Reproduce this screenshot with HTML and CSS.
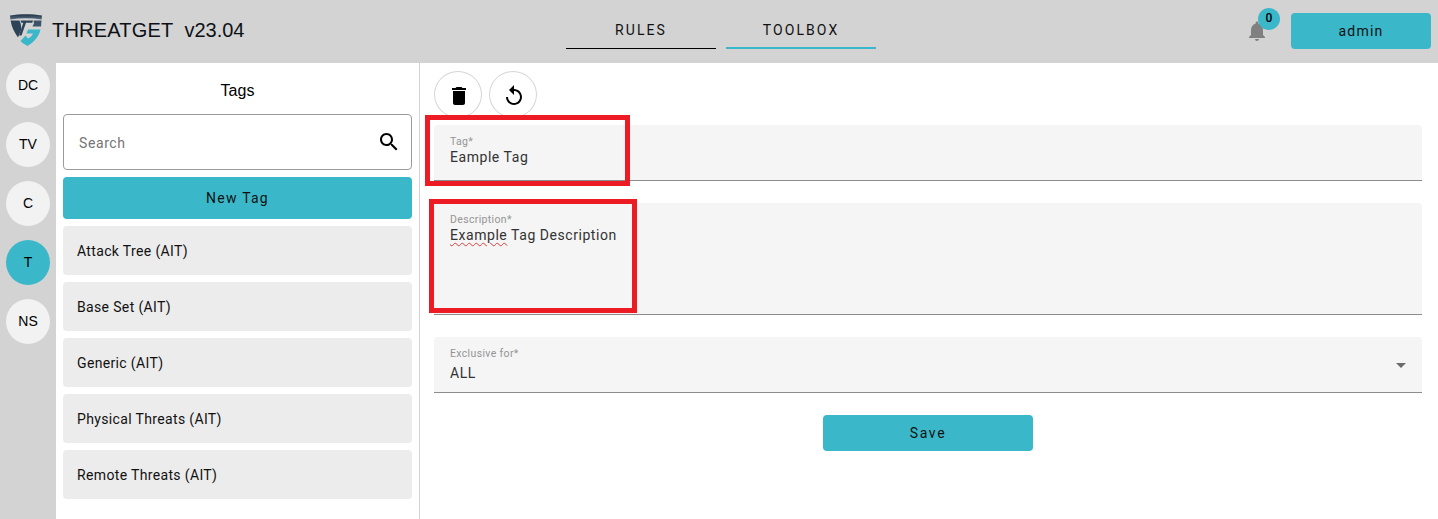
FILE: index.html
```html
<!DOCTYPE html>
<html lang="en">
<head>
<meta charset="utf-8">
<title>THREATGET</title>
<link rel="stylesheet" href="styles.css">
</head>
<body>
<header class="topbar">
  <div class="brand">
    <svg class="logo" width="32" height="32" viewBox="0 0 32 32">
      <defs>
        <linearGradient id="band" x1="0" y1="0" x2="0" y2="1">
          <stop offset="0" stop-color="#1f3346"/>
          <stop offset="1" stop-color="#5a6f80"/>
        </linearGradient>
      </defs>
      <path d="M0 1.500C10 -.3 22 -.3 32 1.500L31.700 5.500C21 3.800 11 3.800 .3 5.500Z" fill="url(#band)"/>
      <path d="M.6 6.500H9.500C11 10 11.500 13 11 16L8 23.500C4 18 1.500 12.500 .6 6.500Z" fill="#2c4257"/>
      <path d="M10.500 6.500H23L22.200 8.700H16L11.500 21.500H9L13.300 8.700H11.300Z" fill="#2c4257"/>
      <path d="M23.500 6.500H31.500L31 12.500H22.500L24 9.500Z" fill="#3d5468"/>
      <path d="M18 15.500H30.500C29 22 25 27.500 17.500 32C14.500 30.500 12.500 29 10.500 27L15.500 21.500L18 24.500C20.500 23.500 22 21.500 23 19.500H16.500Z" fill="#3ab8c9"/>
    </svg>
    <span class="brand-name">THREATGET</span>
    <span class="brand-version">v23.04</span>
  </div>
  <nav class="tabs">
    <a class="tab tab-dark">RULES</a>
    <a class="tab tab-teal">TOOLBOX</a>
  </nav>
  <div class="account">
    <div class="bell">
      <svg width="24" height="24" viewBox="0 0 24 24"><path fill="#808080" d="M12 22c1.100 0 2-.9 2-2h-4c0 1.100.9 2 2 2zm6-6v-5c0-3.070-1.630-5.640-4.500-6.320V4c0-.83-.67-1.500-1.500-1.500s-1.500.67-1.500 1.500v.68C7.640 5.360 6 7.920 6 11v5l-2 2v1h16v-1l-2-2z"/></svg>
      <span class="badge">0</span>
    </div>
    <button class="user-button">admin</button>
  </div>
</header>
<div class="body-row">
  <aside class="rail">
    <div class="rail-item">DC</div>
    <div class="rail-item">TV</div>
    <div class="rail-item">C</div>
    <div class="rail-item rail-active">T</div>
    <div class="rail-item">NS</div>
  </aside>
  <section class="list-panel">
    <h2 class="list-title">Tags</h2>
    <div class="search">
      <span class="search-text">Search</span>
      <svg width="24" height="24" viewBox="0 0 24 24"><path fill="#000" d="M15.500 14h-.79l-.28-.27C15.410 12.590 16 11.110 16 9.500 16 5.910 13.090 3 9.500 3S3 5.910 3 9.500 5.910 16 9.500 16c1.610 0 3.090-.59 4.230-1.570l.27.28v.79l5 4.990L20.490 19l-4.990-5zm-6 0C7.010 14 5 11.990 5 9.500S7.010 5 9.500 5 14 7.010 14 9.500 11.990 14 9.500 14z"/></svg>
    </div>
    <button class="new-tag">New Tag</button>
    <ul class="tag-list">
      <li class="tag-item">Attack Tree (AIT)</li>
      <li class="tag-item">Base Set (AIT)</li>
      <li class="tag-item">Generic (AIT)</li>
      <li class="tag-item">Physical Threats (AIT)</li>
      <li class="tag-item">Remote Threats (AIT)</li>
    </ul>
  </section>
  <main class="detail">
    <div class="actions">
      <button class="icon-button"><svg width="24" height="24" viewBox="0 0 24 24"><path fill="#000" d="M6 19c0 1.100.9 2 2 2h8c1.100 0 2-.9 2-2V7H6v12zM19 4h-3.500l-1-1h-5l-1 1H5v2h14V4z"/></svg></button>
      <button class="icon-button"><svg width="24" height="24" viewBox="0 0 24 24"><path fill="#000" d="M12 5V1L7 6l5 5V7c3.310 0 6 2.690 6 6s-2.690 6-6 6-6-2.690-6-6H4c0 4.420 3.580 8 8 8s8-3.580 8-8-3.580-8-8-8z"/></svg></button>
    </div>
    <div class="field field-tag">
      <span class="field-label">Tag*</span>
      <span class="field-value">Eample Tag</span>
      <span class="mark mark-tag"></span>
    </div>
    <div class="field field-desc">
      <span class="field-label">Description*</span>
      <span class="field-value"><span class="misspelt">Example</span> Tag Description</span>
      <span class="mark mark-desc"></span>
    </div>
    <div class="field field-select">
      <span class="field-label">Exclusive for*</span>
      <span class="field-value value-select">ALL</span>
      <span class="caret"></span>
    </div>
    <button class="save">Save</button>
  </main>
</div>
</body>
</html>
```
FILE: styles.css
```css
* { box-sizing: border-box; }
html, body { height: 100%; }
body {
  margin: 0;
  height: 519px;
  overflow: hidden;
  display: flex;
  flex-direction: column;
  font-family: Roboto, "Liberation Sans", sans-serif;
  color: #000;
  background: #fff;
}
button { font-family: inherit; border: 0; cursor: pointer; }

.topbar {
  height: 63px;
  flex: none;
  background: #d3d3d3;
  display: grid;
  grid-template-columns: 1fr auto 1fr;
  align-items: center;
}
.brand { display: flex; align-items: center; padding-left: 10px; font-family: "Liberation Sans", Arial, sans-serif; font-size: 20px; color: #0d1117; }
.logo { margin-right: 10px; margin-top: -3px; }
.brand-name { letter-spacing: .2px; margin-top: -2px; }
.brand-version { margin-left: 11px; margin-top: -2px; }
.tabs { display: flex; gap: 10px; margin-top: -3px; margin-left: 4px; }
.tab {
  width: 150px;
  height: 38px;
  padding-top: 9px;
  text-align: center;
  font-size: 14px;
  letter-spacing: 2.1px;
  line-height: 20px;
  color: #111;
}
.tab-dark { border-bottom: 1px solid #000; }
.tab-teal { border-bottom: 2px solid #3ab8c9; }
.account { display: flex; justify-content: flex-end; align-items: center; padding-right: 7px; }
.bell { position: relative; width: 24px; height: 24px; margin-right: 22px; margin-top: -1px; }
.badge {
  position: absolute;
  left: 13px;
  top: -11px;
  width: 22px;
  height: 22px;
  border-radius: 50%;
  background: #3ab8c9;
  font-size: 12px;
  font-weight: 500;
  line-height: 20px;
  text-align: center;
}
.user-button {
  width: 140px;
  height: 36px;
  margin-top: -2px;
  padding-bottom: 1px;
  border-radius: 4px;
  background: #3ab8c9;
  font-size: 14px;
  letter-spacing: 1.25px;
  color: #111;
}

.body-row { flex: 1; display: flex; min-height: 0; }
.rail {
  width: 56px;
  flex: none;
  background: #d3d3d3;
  padding: 0 6px;
  display: flex;
  flex-direction: column;
  gap: 14px;
}
.rail-item {
  width: 44px;
  height: 45px;
  border-radius: 50%;
  background: #f2f2f2;
  font-family: "Liberation Sans", Arial, sans-serif;
  font-size: 14px;
  display: flex;
  align-items: center;
  justify-content: center;
  padding-bottom: 2px;
}
.rail-active { background: #3ab8c9; }
.list-panel {
  width: 364px;
  flex: none;
  border-right: 1px solid #d3d3d3;
  padding: 0 7px;
}
.list-title {
  margin: 0;
  height: 51px;
  padding-top: 19px;
  font-family: "Liberation Sans", Arial, sans-serif;
  font-size: 16px;
  font-weight: 400;
  line-height: 18px;
  text-align: center;
}
.search {
  width: 349px;
  height: 56px;
  border: 1px solid #9b9b9b;
  border-radius: 4px;
  display: flex;
  align-items: center;
  justify-content: space-between;
  padding: 0 10px 0 15px;
}
.search-text { font-size: 14px; letter-spacing: .6px; color: #757575; margin-top: 2px; }
.new-tag {
  display: block;
  width: 349px;
  height: 42px;
  margin-top: 7px;
  background: #3ab8c9;
  border-radius: 4px;
  font-size: 14px;
  letter-spacing: 1.25px;
  color: #111;
}
.tag-list { list-style: none; margin: 7px 0 0; padding: 0; display: flex; flex-direction: column; gap: 7px; }
.tag-item {
  width: 349px;
  height: 49px;
  background: #ececec;
  border-radius: 4px;
  padding: 0 14px;
  font-size: 14px;
  line-height: 50px;
  letter-spacing: .35px;
  color: #111;
}

.detail { flex: 1; position: relative; padding: 8px 16px 0 14px; display: flex; flex-direction: column; }
.actions { display: flex; gap: 7px; height: 54px; }
.icon-button {
  width: 48px;
  height: 47px;
  border-radius: 50%;
  background: #fff;
  border: 1px solid #d6d6d6;
  padding: 2px 0 0 2px;
  display: flex;
  align-items: center;
  justify-content: center;
}
.field {
  position: relative;
  display: flex;
  flex-direction: column;
  background: #f5f5f5;
  border-bottom: 1px solid #8c8c8c;
  border-radius: 4px 4px 0 0;
  padding-left: 16px;
}
.field-tag { height: 56px; padding-top: 11px; }
.field-desc { height: 112px; margin-top: 22px; padding-top: 11px; }
.field-select { height: 56px; margin-top: 22px; padding-top: 11px; }
.field-label { font-size: 10.500px; line-height: 12px; letter-spacing: .35px; color: #949494; }
.field-value { font-size: 14px; line-height: 20px; letter-spacing: .55px; color: #333; margin-top: -1px; }
.value-select { margin-top: 3px; }
.misspelt { text-decoration: underline wavy #e03c3c 1px; text-underline-offset: 2px; }
.caret {
  position: absolute;
  right: 16px;
  top: 26px;
  border-left: 5px solid transparent;
  border-right: 5px solid transparent;
  border-top: 5px solid #6b6b6b;
}
.mark { position: absolute; border: 5px solid #ed1c24; pointer-events: none; }
.mark-tag { left: -9px; top: -10px; width: 205px; height: 71px; }
.mark-desc { left: -5px; top: -4px; width: 208px; height: 114px; }
.save {
  align-self: center;
  width: 210px;
  height: 36px;
  margin-top: 22px;
  background: #3ab8c9;
  border-radius: 4px;
  font-size: 14px;
  letter-spacing: 1.7px;
  color: #111;
}
```
